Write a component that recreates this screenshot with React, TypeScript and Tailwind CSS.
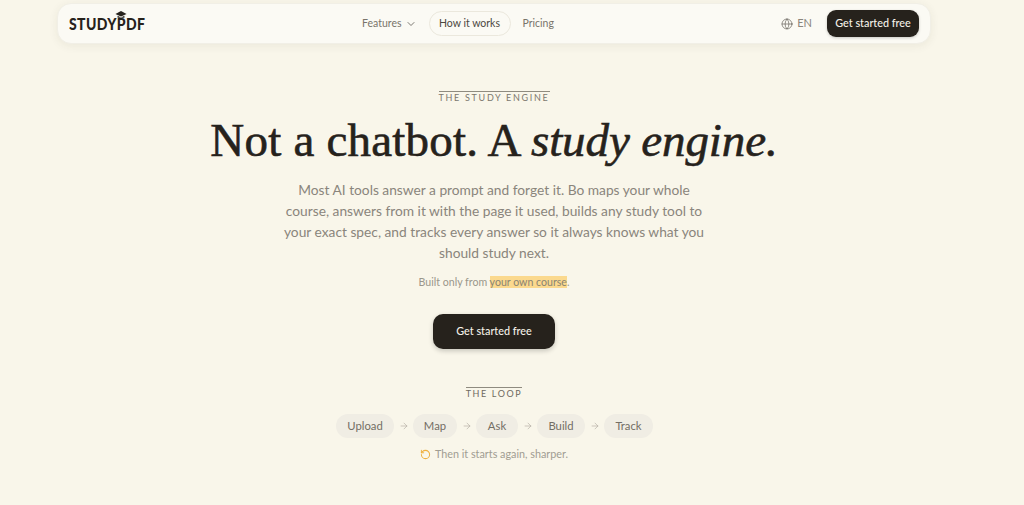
import { ChevronDown, Globe, ArrowRight, RotateCcw } from "lucide-react";

const sans = "font-['Lato','Noto_Sans',sans-serif]";

function Cap() {
  return (
    <svg width="12" height="8" viewBox="0 0 14 8" className="absolute left-[-2px] top-[-3px]">
      <path d="M7 0.5 13.5 3.4 7 6 0.5 3.4Z" fill="#26221c" />
      <path d="M3 5.2V7.2H11V5.2L7 6.8Z" fill="#26221c" />
    </svg>
  );
}

function Pill({ label, w }: { label: string; w: string }) {
  return (
    <span className={`flex h-6 items-center justify-center rounded-full bg-[#f0ede4] text-[11.3px] text-[#736e64] ${w}`}>
      {label}
    </span>
  );
}

function Arrow() {
  return <ArrowRight size={10} strokeWidth={1.4} className="mx-[4.5px] text-[#a8a499]" />;
}

export default function App() {
  const steps: [string, string][] = [
    ["Upload", "w-[58px]"],
    ["Map", "w-[44px]"],
    ["Ask", "w-[42px]"],
    ["Build", "w-[48px]"],
    ["Track", "w-[49px]"],
  ];
  return (
    <div className={`h-[505px] w-[1024px] overflow-hidden bg-[#f9f6ea] pr-[36px] ${sans}`}>
      <div className="flex flex-col items-center">
        <header className="mt-[3px] flex h-[41px] w-[874px] shrink-0 items-center rounded-[14px] border border-[#f1efe6] bg-[#fbfaf4] pl-[11px] pr-[11px] shadow-[0_2px_10px_rgba(60,50,30,0.07)]">
          <div className="inline-block w-[120px] origin-center scale-y-[1.2] text-[14px] font-black tracking-[0.4px] text-[#26221c]">
            STUDY
            <span className="relative">
              P
              <Cap />
            </span>
            DF
          </div>
          <nav className="ml-[173px] flex items-center text-[10.5px] text-[#79746a]">
            <span className="flex items-center gap-[3px]">
              Features
              <ChevronDown size={12} strokeWidth={1.6} className="text-[#5c5850]" />
            </span>
            <span className="ml-[12px] flex h-[25px] w-[82px] items-center justify-center rounded-full border border-[#ebe8dd] text-[#4c483f]">
              How it works
            </span>
            <span className="ml-[12px]">Pricing</span>
          </nav>
          <div className="ml-auto flex items-center">
            <Globe size={12} strokeWidth={1.3} className="text-[#5c5850]" />
            <span className="ml-[4px] text-[11px] text-[#8a867c]">EN</span>
            <button className="ml-[15px] flex h-[27px] w-[92px] items-center justify-center rounded-[9px] bg-[#26221c] text-[10.8px] font-medium text-[#f5f2e8] shadow-[0_1px_3px_rgba(0,0,0,0.2)]">
              Get started free
            </button>
          </div>
        </header>

        <div className="mt-[47px] flex flex-col items-center">
          <div className="border-t border-[#8f8b80] text-[9px] leading-[11px] tracking-[1.7px] text-[#7c786e]">
            THE STUDY ENGINE
          </div>
          <h1 className="mt-[9px] font-['Liberation_Serif',serif] text-[47px] leading-[56px] tracking-[0.2px] text-[#26221c] [-webkit-text-stroke:0.6px_#26221c]">
            Not a chatbot. A <em className="tracking-[-0.1px]">study engine.</em>
          </h1>
          <p className="mt-[11px] w-[425px] text-center text-[13.75px] leading-[21px] text-[#8a857c]">
            Most AI tools answer a prompt and forget it. Bo maps your whole course, answers from it with the page it used, builds any study tool to your exact spec, and tracks every answer so it always knows what you should study next.
          </p>
          <p className="mt-[11px] text-[10.6px] leading-[16px] text-[#9a968b]">
            Built only from <span className="bg-[#fbd98e] text-[#8a8472]">your own course</span>.
          </p>
          <button className="mt-[24px] flex h-[35px] w-[122px] items-center justify-center rounded-[10px] bg-[#26221c] text-[10.8px] font-medium text-[#f5f2e8] shadow-[0_2px_5px_rgba(0,0,0,0.2)]">
            Get started free
          </button>
          <div className="mt-[38px] border-t border-[#8f8b80] text-[9px] leading-[11px] tracking-[1.6px] text-[#6f6a60]">
            THE LOOP
          </div>
          <div className="ml-px mt-[15px] flex items-center">
            {steps.map(([label, w], i) => (
              <span key={label} className="flex items-center">
                {i > 0 && <Arrow />}
                <Pill label={label} w={w} />
              </span>
            ))}
          </div>
          <div className="mt-[9px] flex items-center gap-[4px] text-[10.8px] leading-[14px] text-[#a19d92]">
            <RotateCcw size={11} strokeWidth={2.2} className="text-[#eeb040]" />
            Then it starts again, sharper.
          </div>
        </div>
      </div>
    </div>
  );
}
